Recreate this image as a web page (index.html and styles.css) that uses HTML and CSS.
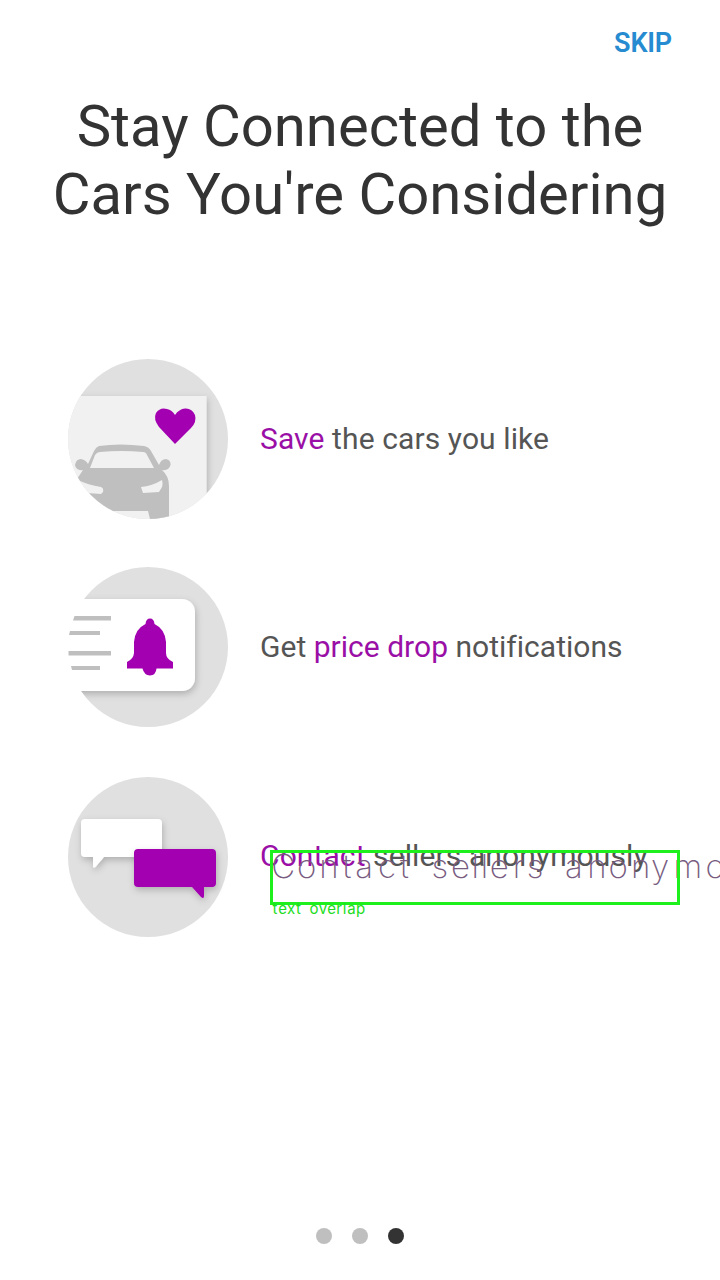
FILE: index.html
```html
<!DOCTYPE html>
<html lang="en">
<head>
<meta charset="utf-8">
<title>Stay Connected</title>
<link rel="stylesheet" href="styles.css">
</head>
<body>
<main class="screen">
  <header class="topbar"><span class="skip">SKIP</span></header>
  <h1 class="title">Stay Connected to the<br>Cars You're Considering</h1>
  <ul class="features">
    <li class="feature">
      <svg class="art" viewBox="0 0 160 160">
        <defs>
          <clipPath id="disc"><circle cx="80" cy="80" r="80"/></clipPath>
          <filter id="shadow" x="-20%" y="-20%" width="150%" height="150%"><feDropShadow dx="1" dy="3" stdDeviation="3.500" flood-color="#000" flood-opacity=".22"/></filter>
        </defs>
        <g clip-path="url(#disc)">
          <rect width="160" height="160" fill="#e0e0e0"/>
          <rect x="-10" y="37" width="148.500" height="140" fill="#f1f1f1" filter="url(#shadow)"/>
          <path fill="#bfbfbf" fill-rule="evenodd" d="M31 87Q52 84 76 87Q81 88 83 92L91 106Q93 100 98 100Q103 101 102.500 106Q101 112 94 111Q101 117 101 127V160H82L80 152H26L9 132V120L15 111Q8 112 7 106Q8 100 13 100Q18 101 20 105L26 92Q28 88 31 87ZM32 93Q53 91 75 93Q78 93 79 96L86 109H22L27 96Q29 93 32 93ZM10 121Q20 126 33 128Q36 129 35 133L33 135L19 134L10 128ZM94 121Q95 125 94 128L91 133L75 134L73 128Q84 127 94 121Z"/>
          <path fill="#a200b0" d="M107 85L91 68Q85 60 88 54Q92 48 99 50Q104 51 107 56Q111 50 117 49.500Q124 49 127 56Q129 63 123 69Z"/>
        </g>
      </svg>
      <p class="label"><span class="accent">Save</span> the cars you like</p>
    </li>
    <li class="feature">
      <svg class="art" viewBox="0 0 160 160">
        <circle cx="80" cy="80" r="80" fill="#e0e0e0"/>
        <g clip-path="url(#disc)"><rect x="-20" y="32" width="147" height="92" rx="13" fill="#fff" filter="url(#shadow)"/></g>
        <path fill="#fff" d="M-1 32H18Q-7 73 14 124H-1Z"/>
        <path fill="#bfbfbf" d="M6.500 49H43V53.500H5ZM2 64H32V68H1ZM.500 84H43V88.500H.500ZM3 99H32V103H4Z"/>
        <path fill="#a200b0" d="M77.500 57Q78 51.500 82 51.500Q86 51.500 86.500 57Q97 62 98 75V86Q98 92 105 95V101.500H88.500Q88 108 82 108.500Q76 108 74.500 101.500H59V95Q65.500 92 66 86V75Q67 62 77.500 57Z"/>
      </svg>
      <p class="label label-price">Get <span class="accent">price drop</span> notifications</p>
    </li>
    <li class="feature feature-contact">
      <svg class="art" viewBox="0 0 160 160">
        <circle cx="80" cy="80" r="80" fill="#e0e0e0"/>
        <path fill="#fff" filter="url(#shadow)" d="M17 42H90Q94 42 94 46V76Q94 80 90 80H36L27.500 90Q25 92 25 89V80H17Q13 80 13 76V46Q13 42 17 42Z"/>
        <path fill="#a200b0" filter="url(#shadow)" d="M70 72H144Q148 72 148 76V106Q148 110 144 110H136V119Q136 122.500 133 120L124 110H70Q66 110 66 106V76Q66 72 70 72Z"/>
      </svg>
      <p class="label label-contact"><span class="accent">Contact</span> sellers anonymously</p>
    </li>
  </ul>
  <nav class="dots"><i class="dot"></i><i class="dot"></i><i class="dot active"></i></nav>
  <svg class="annotation" viewBox="0 0 450 70">
    <text class="trace" y="28" x="13.300 36.700 58.900 77 94.200 116.900 134.500 150 169.900 190.500 205.200 214.500 229.300 248.500 265 285 303.800 327 348.100 370.600 390 417.800 445.100">Contact sellers anonymo</text>
    <rect class="frame" x="1.500" y="1.500" width="407" height="52"/>
    <text class="tag" y="64" x="5 12.500 21 28.500 35.500 44 53 61.500 69 74.500 81.500 90.500">text overlap</text>
  </svg>
</main>
</body>
</html>
```
FILE: styles.css
```css
* { box-sizing: border-box; }
body { margin: 0; background: #fff; font-family: Roboto, sans-serif; color: #333; }
.screen { position: relative; display: flex; flex-direction: column; width: 720px; height: 1280px; overflow: hidden; }
.topbar { display: flex; justify-content: flex-end; height: 92px; padding: 27px 48px 0; }
.skip { font-size: 27px; line-height: 33px; font-weight: 600; color: #268bd0; letter-spacing: -.2px; }
.title { margin: 0; font-size: 58px; line-height: 68px; font-weight: 400; text-align: center; white-space: nowrap; }
.features { display: flex; flex-direction: column; gap: 48px; margin: 131px 0 0; padding: 0 0 0 68px; list-style: none; }
.feature { display: flex; align-items: center; gap: 32px; height: 160px; }
.feature-contact { margin-top: 2px; }
.art { width: 160px; height: 160px; flex: none; overflow: visible; }
.label { margin: 0; font-size: 30px; line-height: 36px; white-space: nowrap; color: #555; letter-spacing: .1px; }
.label-price { letter-spacing: .02px; }
.label-contact { padding-bottom: 3px; }
.accent { color: #9a0fa6; }
.dots { display: flex; justify-content: center; gap: 20px; margin-top: auto; padding-bottom: 36px; }
.dot { width: 16px; height: 16px; border-radius: 50%; background: #bfbfbf; }
.dot.active { background: #333; }
.annotation { position: absolute; left: 270px; top: 850px; width: 450px; height: 70px; }
.trace, .tag { font-family: Inter, Roboto, sans-serif; text-anchor: middle; }
.trace { font-size: 33px; font-weight: 200; fill: #785c80; }
.tag { font-size: 15px; font-weight: 400; fill: #20dc20; }
.frame { fill: none; stroke: #1ef01e; stroke-width: 3; }
```
